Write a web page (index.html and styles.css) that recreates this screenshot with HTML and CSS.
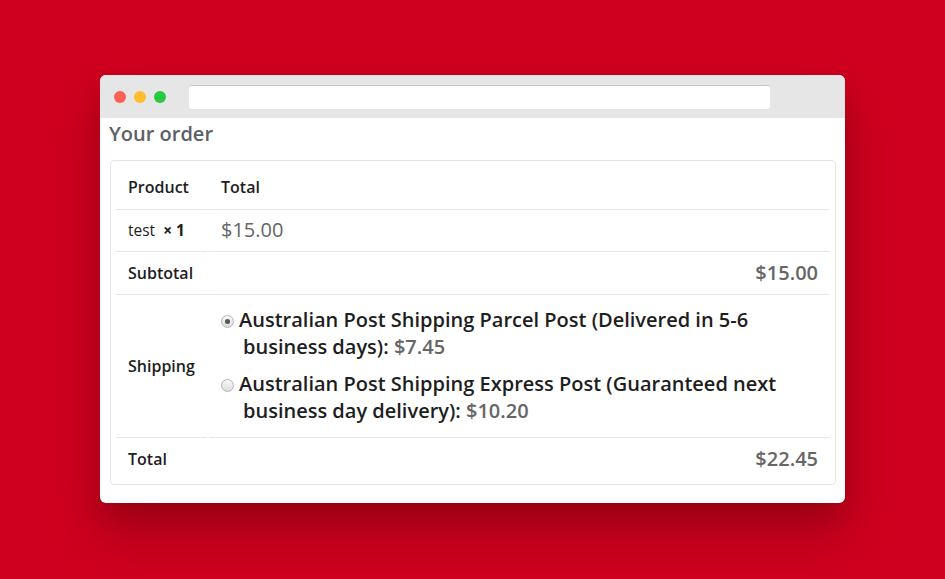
FILE: index.html
```html
<!DOCTYPE html>
<html>
<head>
<meta charset="utf-8">
<link rel="stylesheet" href="styles.css">
</head>
<body>
<div class="window">
  <div class="titlebar">
    <span class="dot red"></span>
    <span class="dot yellow"></span>
    <span class="dot green"></span>
    <div class="urlbar"></div>
  </div>
  <div class="content">
    <h3 class="heading">Your order</h3>
    <div class="box">
      <table class="order">
        <thead>
          <tr><th class="c1">Product</th><th class="c2">Total</th></tr>
        </thead>
        <tbody>
          <tr class="item"><td class="c1">test&nbsp; <strong>× 1</strong></td><td class="c2 price-reg">$15.00</td></tr>
        </tbody>
        <tfoot>
          <tr><th class="c1">Subtotal</th><td class="c2 right price">$15.00</td></tr>
          <tr class="ship">
            <th class="c1">Shipping</th>
            <td class="c2">
              <ul class="methods">
                <li><span class="radio checked"></span><label>Australian Post Shipping Parcel Post (Delivered in 5-6 business days): <span class="amt">$7.45</span></label></li>
                <li><span class="radio"></span><label>Australian Post Shipping Express Post (Guaranteed next business day delivery): <span class="amt">$10.20</span></label></li>
              </ul>
            </td>
          </tr>
          <tr><th class="c1">Total</th><td class="c2 right price">$22.45</td></tr>
        </tfoot>
      </table>
    </div>
  </div>
</div>
</body>
</html>
```
FILE: styles.css
```css
html, body {
  margin: 0;
  height: 100%;
}
body {
  background: #cf001f;
  display: flex;
  align-items: center;
  justify-content: center;
  font-family: "Open Sans", "Liberation Sans", sans-serif;
  color: #1e1e1e;
}
.window {
  width: 745px;
  margin-top: -1px;
  background: #fff;
  border-radius: 6px;
  overflow: hidden;
  box-shadow: 0 30px 50px rgba(80, 0, 10, 0.35), 0 10px 20px rgba(80, 0, 10, 0.15);
}
.titlebar {
  height: 43px;
  background: #e6e6e6;
  display: flex;
  align-items: center;
  padding-left: 14px;
  box-sizing: border-box;
}
.dot {
  width: 12px;
  height: 12px;
  border-radius: 50%;
  margin-right: 8px;
}
.red { background: #fe5f57; }
.yellow { background: #febc2e; }
.green { background: #28c840; }
.urlbar {
  margin-left: 15px;
  width: 581px;
  height: 24px;
  background: #fff;
  border-radius: 3px;
  border-top: 1px solid #c8c8c8;
  box-sizing: border-box;
}
.content {
  padding: 0 9px 18px 10px;
}
.heading {
  margin: 0 0 0 -1px;
  font-size: 20px;
  font-weight: 600;
  color: #5e5e66;
  line-height: 32px;
  height: 42px;
}
.box {
  border: 1px solid #e4e4e4;
  border-radius: 4px;
  padding: 4px 3px;
}
.order {
  width: 100%;
  border-collapse: separate;
  border-spacing: 2px 0;
}
.order th, .order td {
  text-align: left;
  padding: 9px 12px;
  line-height: 24px;
  font-size: 15.5px;
  border-top: 1px solid #e6e6e6;
  vertical-align: middle;
}
.order th {
  font-weight: 600;
  font-size: 16px;
}
.order thead th {
  border-top: none;
  padding: 10px 12px;
}
.order .item td { padding: 8px 12px 9px; }
.c1 { width: 67px; }
.order strong { font-weight: 700; }
.order .price-reg {
  font-size: 20px;
  color: #666;
}
.order .right { text-align: right; }
.order .price {
  font-size: 20px;
  font-weight: 600;
  color: #666;
}
.order .ship td { padding: 11px 12px 13px; }
.methods {
  list-style: none;
  margin: 0;
  padding: 0;
}
.methods li {
  font-size: 20px;
  font-weight: 600;
  line-height: 27px;
  padding-left: 22px;
  text-indent: -22px;
  margin-bottom: 10px;
}
.methods li:last-child { margin-bottom: 0; }
.amt { color: #666; }
.radio {
  display: inline-block;
  width: 11px;
  height: 11px;
  border-radius: 50%;
  border: 1px solid #b4b4b4;
  background: linear-gradient(#fafafa, #dcdcdc);
  margin-right: 5px;
  vertical-align: -1px;
  position: relative;
  text-indent: 0;
}
.radio.checked::after {
  content: "";
  position: absolute;
  left: 3px;
  top: 3px;
  width: 5px;
  height: 5px;
  border-radius: 50%;
  background: #555;
}
```
